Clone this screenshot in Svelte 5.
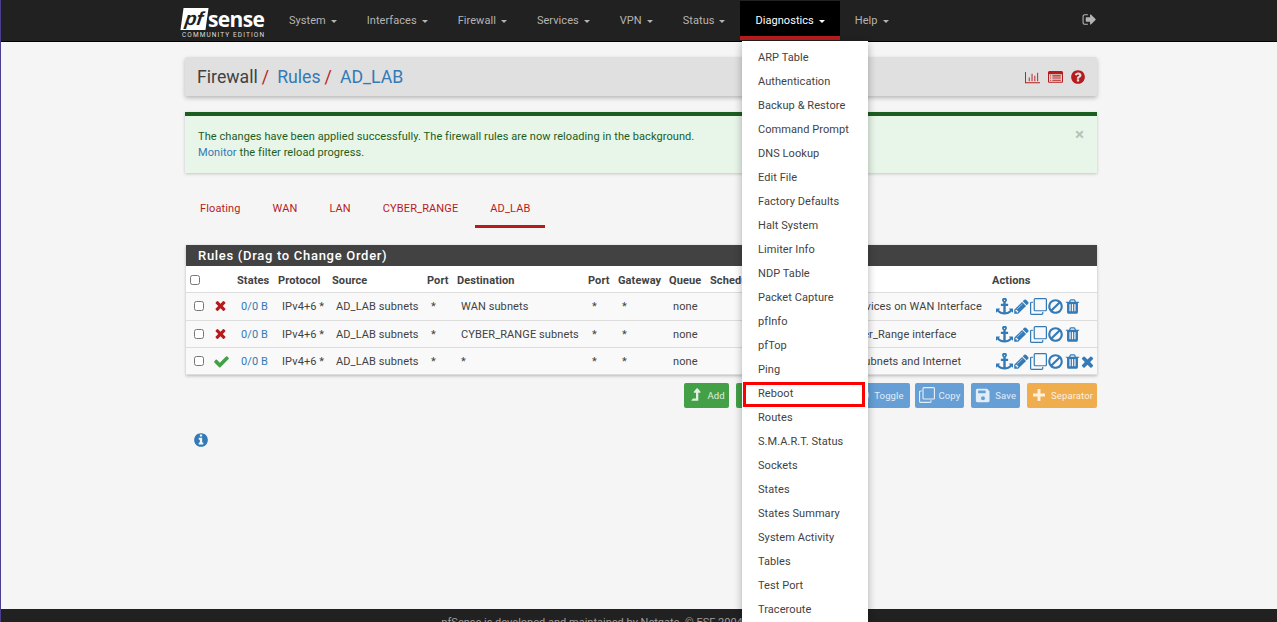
<script>
  const nav = ['System', 'Interfaces', 'Firewall', 'Services', 'VPN', 'Status', 'Diagnostics', 'Help'];
  const menu = ['ARP Table', 'Authentication', 'Backup & Restore', 'Command Prompt', 'DNS Lookup', 'Edit File', 'Factory Defaults', 'Halt System', 'Limiter Info', 'NDP Table', 'Packet Capture', 'pfInfo', 'pfTop', 'Ping', 'Reboot', 'Routes', 'S.M.A.R.T. Status', 'Sockets', 'States', 'States Summary', 'System Activity', 'Tables', 'Test Port', 'Traceroute'];
  const tabs = ['Floating', 'WAN', 'LAN', 'CYBER_RANGE', 'AD_LAB'];
  const rules = [
    { ok: false, dest: 'WAN subnets', port: '*', desc: 'Block all services on WAN Interface' },
    { ok: false, dest: 'CYBER_RANGE subnets', port: '*', desc: 'Drop to Cyber_Range interface' },
    { ok: true, dest: '*', port: '*', desc: 'Allow LAB subnets and Internet' }
  ];

  const icons = {
    anchor: 'M960 256q0-26-19-45t-45-19-45 19-19 45 19 45 45 19 45-19 19-45zm832 888v352q0 22-20 30-8 2-12 2-12 0-23-9l-93-93q-119 143-318.500 226.500t-429.500 83.500-429.500-83.500-318.500-226.500l-93 93q-9 9-23 9-4 0-12-2-20-8-20-30v-352q0-14 9-23t23-9h352q22 0 30 20 8 19-7 35l-100 100q67 91 189.500 153.500t271.500 82.500v-647h-192q-26 0-45-19t-19-45v-128q0-26 19-45t45-19h192v-163q-58-34-93-92.500t-35-128.500q0-106 75-181t181-75 181 75 75 181q0 70-35 128.500t-93 92.500v163h192q26 0 45 19t19 45v128q0 26-19 45t-45 19h-192v647q149-20 271.500-82.500t189.500-153.500l-100-100q-15-16-7-35 8-20 30-20h352q14 0 23 9t9 23z',
    pencil: 'M491 1536l91-91-235-235-91 91v107h128v128h107zm523-928q0-22-22-22-10 0-17 7l-542 542q-7 7-7 17 0 22 22 22 10 0 17-7l542-542q7-7 7-17zm-54-192l416 416-832 832h-416v-416zm683 96q0 53-37 90l-166 166-416-416 166-165q36-38 90-38 53 0 91 38l235 234q37 39 37 91z',
    clone: 'M1664 1632v-1088q0-13-9.500-22.500t-22.500-9.500h-1088q-13 0-22.500 9.500t-9.500 22.500v1088q0 13 9.500 22.500t22.500 9.500h1088q13 0 22.500-9.500t9.500-22.500zm128-1088v1088q0 66-47 113t-113 47h-1088q-66 0-113-47t-47-113v-1088q0-66 47-113t113-47h1088q66 0 113 47t47 113zm-384-384v160h-128v-160q0-13-9.500-22.500t-22.500-9.500h-1088q-13 0-22.500 9.500t-9.500 22.500v1088q0 13 9.500 22.500t22.500 9.500h160v128h-160q-66 0-113-47t-47-113v-1088q0-66 47-113t113-47h1088q66 0 113 47t47 113z',
    ban: 'M1440 893q0-161-87-295l-754 753q137 89 297 89 111 0 211.500-43.500t173.500-116.500 116-174.500 43-212.500zm-999 299l755-754q-135-91-300-91-148 0-273 73t-198 199-73 274q0 162 89 299zm1223-299q0 157-61 300t-163.500 246-245 164-298.500 61-298.500-61-245-164-163.500-246-61-300 61-299.500 163.500-245.500 245-164 298.500-61 298.500 61 245 164 163.500 245.500 61 299.500z',
    trash: 'M704 1376v-704q0-14-9-23t-23-9h-64q-14 0-23 9t-9 23v704q0 14 9 23t23 9h64q14 0 23-9t9-23zm256 0v-704q0-14-9-23t-23-9h-64q-14 0-23 9t-9 23v704q0 14 9 23t23 9h64q14 0 23-9t9-23zm256 0v-704q0-14-9-23t-23-9h-64q-14 0-23 9t-9 23v704q0 14 9 23t23 9h64q14 0 23-9t9-23zm-544-992h448l-48-117q-7-9-17-11h-317q-10 2-17 11zm928 32v64q0 14-9 23t-23 9h-96v948q0 83-47 143.500t-113 60.500h-832q-66 0-113-58.500t-47-141.500v-952h-96q-14 0-23-9t-9-23v-64q0-14 9-23t23-9h309l70-167q15-37 54-63t79-26h320q40 0 79 26t54 63l70 167h309q14 0 23 9t9 23z',
    times: 'M1490 1322q0 40-28 68l-136 136q-28 28-68 28t-68-28l-294-294-294 294q-28 28-68 28t-68-28l-136-136q-28-28-28-68t28-68l294-294-294-294q-28-28-28-68t28-68l136-136q28-28 68-28t68 28l294 294 294-294q28-28 68-28t68 28l136 136q28 28 28 68t-28 68l-294 294 294 294q28 28 28 68z',
    check: 'M1671 566q0 40-28 68l-724 724-136 136q-28 28-68 28t-68-28l-136-136-362-362q-28-28-28-68t28-68l136-136q28-28 68-28t68 28l294 295 656-657q28-28 68-28t68 28l136 136q28 28 28 68z',
    question: 'M1024 1376v-192q0-14-9-23t-23-9h-192q-14 0-23 9t-9 23v192q0 14 9 23t23 9h192q14 0 23-9t9-23zm256-672q0-88-55.500-163t-138.500-116-170-41q-243 0-371 213-15 24 8 42l132 100q7 6 19 6 16 0 25-12 53-68 86-92 34-24 86-24 48 0 85.500 26t37.500 59q0 38-20 61t-68 45q-63 28-115.500 86.500t-52.500 125.500v36q0 14 9 23t23 9h192q14 0 23-9t9-23q0-19 21.500-49.500t54.500-49.500q32-18 49-28.500t46-35 44.500-48 28-60.500 12.500-81zm384 192q0 209-103 385.500t-279.500 279.500-385.500 103-385.500-103-279.500-279.500-103-385.500 103-385.500 279.500-279.500 385.500-103 385.500 103 279.500 279.500 103 385.500z',
    info: 'M1152 1376v-160q0-14-9-23t-23-9h-96v-512q0-14-9-23t-23-9h-320q-14 0-23 9t-9 23v160q0 14 9 23t23 9h96v320h-96q-14 0-23 9t-9 23v160q0 14 9 23t23 9h448q14 0 23-9t9-23zm-128-896v-160q0-14-9-23t-23-9h-192q-14 0-23 9t-9 23v160q0 14 9 23t23 9h192q14 0 23-9t9-23zm640 416q0 209-103 385.500t-279.500 279.500-385.500 103-385.500-103-279.500-279.500-103-385.500 103-385.500 279.500-279.500 385.500-103 385.500 103 279.500 279.500 103 385.500z',
    signout: 'M704 1440q0 4 1 20t.5 26.500-3 23.500-10 19.500-20.500 6.500h-320q-119 0-203.500-84.500t-84.500-203.500v-704q0-119 84.500-203.500t203.500-84.500h320q13 0 22.500 9.500t9.500 22.500q0 4 1 20t.5 26.500-3 23.500-10 19.500-20.500 6.500h-320q-66 0-113 47t-47 113v704q0 66 47 113t113 47h312l11.500 1 11.500 3 8 5.500 7 9 2 13.500zm928-544q0 26-19 45l-544 544q-19 19-45 19t-45-19-19-45v-288h-448q-26 0-45-19t-19-45v-384q0-26 19-45t45-19h448v-288q0-26 19-45t45-19 45 19l544 544q19 19 19 45z',
    chart: 'M640 896v512h-128v-512h128zm384-512v1024h-128v-1024h128zm1024 1152v128h-2048v-1536h128v1408h1920zm-640-896v768h-128v-768h128zm384-384v1152h-128v-1152h128z',
    list: 'M384 1184v64q0 13-9.500 22.500t-22.500 9.500h-64q-13 0-22.500-9.500t-9.500-22.500v-64q0-13 9.500-22.500t22.500-9.500h64q13 0 22.500 9.500t9.500 22.500zm0-256v64q0 13-9.500 22.500t-22.500 9.500h-64q-13 0-22.500-9.500t-9.500-22.500v-64q0-13 9.500-22.500t22.500-9.500h64q13 0 22.500 9.500t9.500 22.500zm0-256v64q0 13-9.500 22.500t-22.500 9.500h-64q-13 0-22.500-9.500t-9.500-22.500v-64q0-13 9.500-22.500t22.500-9.500h64q13 0 22.500 9.500t9.500 22.500zm1152 512v64q0 13-9.500 22.500t-22.500 9.500h-960q-13 0-22.500-9.500t-9.500-22.500v-64q0-13 9.500-22.500t22.500-9.500h960q13 0 22.500 9.500t9.500 22.500zm0-256v64q0 13-9.500 22.500t-22.500 9.500h-960q-13 0-22.500-9.500t-9.500-22.500v-64q0-13 9.500-22.500t22.500-9.500h960q13 0 22.500 9.500t9.500 22.500zm0-256v64q0 13-9.500 22.500t-22.500 9.500h-960q-13 0-22.500-9.500t-9.500-22.500v-64q0-13 9.500-22.500t22.500-9.500h960q13 0 22.500 9.500t9.500 22.500zm128 704v-832q0-13-9.500-22.500t-22.500-9.500h-1472q-13 0-22.500 9.500t-9.500 22.500v832q0 13 9.500 22.500t22.500 9.500h1472q13 0 22.500-9.500t9.500-22.500zm128-1088v1088q0 66-47 113t-113 47h-1472q-66 0-113-47t-47-113v-1088q0-66 47-113t113-47h1472q66 0 113 47t47 113z',
    levelup: 'M1402 603q-18 39-58 39h-192v864q0 14-9 23t-23 9h-704q-21 0-29-18-8-20 4-35l160-192q9-11 25-11h320v-640h-192q-40 0-58-37-17-37 9-68l320-384q18-22 49-22t49 22l320 384q27 32 9 68z',
    save: 'M256 192h1060q40 0 68 28l216 216q28 28 28 68v1040q0 66-47 113t-113 47h-1212q-66 0-113-47t-47-113v-1192q0-66 47-113t113-47zm96 220v272q0 28 28 28h784q28 0 28-28v-272q0-28-28-28h-784q-28 0-28 28zm544 1060a224 224 0 1 0 0-448 224 224 0 1 0 0 448z',
    plus: 'M736 224h320v512h512v320h-512v512h-320v-512h-512v-320h512z'
  };
  const rowActions = ['anchor', 'pencil', 'clone', 'ban', 'trash'];
  const buttons = [
    { label: 'Add', icon: 'levelup', kind: 'green' },
    { label: 'Add', icon: 'levelup', kind: 'green flip' },
    { label: 'Delete', icon: 'trash', kind: 'red' },
    { label: 'Toggle', icon: 'ban', kind: 'blue toggle' },
    { label: 'Copy', icon: 'clone', kind: 'blue' },
    { label: 'Save', icon: 'save', kind: 'blue' },
    { label: 'Separator', icon: 'plus', kind: 'orange' }
  ];
</script>

{#snippet icon(name, cls = '')}
  <svg class="fa {cls}" viewBox={name === 'chart' ? '0 0 2048 1792' : '0 0 1792 1792'} aria-hidden="true"><path d={icons[name]} fill="currentColor" fill-rule={name === 'save' ? 'evenodd' : 'nonzero'} transform={name === 'clone' ? 'translate(0 1792) scale(1 -1)' : undefined} /></svg>
{/snippet}

<div class="page">
  <header class="navbar">
    <div class="navbar-inner">
      <div class="logo">
        <div class="logo-top"><span class="logo-pf">pf</span><span class="logo-sense">sense</span></div>
        <div class="logo-sub">COMMUNITY EDITION</div>
      </div>
      <nav class="nav">
        {#each nav as item}
          <div class="nav-item" class:open={item === 'Diagnostics'}>{item}<span class="caret"></span></div>
        {/each}
      </nav>
      <div class="logout">{@render icon('signout')}</div>
    </div>
    <ul class="dropdown">
      {#each menu as item}
        <li class:marked={item === 'Reboot'}>{item}</li>
      {/each}
    </ul>
  </header>

  <main class="container">
    <div class="breadcrumb">
      <div class="crumbs">
        <span>Firewall</span><i>/</i><a href="#rules">Rules</a><i>/</i><a href="#lab">AD_LAB</a>
      </div>
      <div class="crumb-icons">
        {@render icon('chart', 'ci chart')}
        {@render icon('list', 'ci')}
        {@render icon('question', 'ci help')}
      </div>
    </div>

    <div class="alert">
      <span class="alert-close">×</span>
      <div>The changes have been applied successfully. The firewall rules are now reloading in the background.</div>
      <div><a href="#monitor">Monitor</a> the filter reload progress.</div>
    </div>

    <ul class="tabs">
      {#each tabs as tab}
        <li class:active={tab === 'AD_LAB'}>{tab}</li>
      {/each}
    </ul>

    <section class="panel">
      <h2>Rules (Drag to Change Order)</h2>
      <table>
        <colgroup>
          <col style="width:22px" /><col style="width:25px" /><col style="width:41px" /><col style="width:54px" /><col style="width:95px" /><col style="width:30px" /><col style="width:131px" /><col style="width:30px" /><col style="width:51px" /><col style="width:41px" /><col style="width:91px" /><col style="width:191px" /><col />
        </colgroup>
        <thead>
          <tr>
            <th class="chk"><input type="checkbox" /></th><th></th><th>States</th><th>Protocol</th><th>Source</th><th>Port</th><th>Destination</th><th>Port</th><th>Gateway</th><th>Queue</th><th>Schedule</th><th>Description</th><th>Actions</th>
          </tr>
        </thead>
        <tbody>
          {#each rules as rule, i}
            <tr>
              <td class="chk"><input type="checkbox" /></td>
              <td class="status">
                {#if rule.ok}
                  {@render icon('check', 'st ok')}
                {:else}
                  {@render icon('times', 'st no')}
                {/if}
              </td>
              <td><a href="#states">0/0 B</a></td>
              <td>IPv4+6 *</td>
              <td>AD_LAB subnets</td>
              <td>*</td>
              <td>{rule.dest}</td>
              <td>*</td>
              <td>*</td>
              <td>none</td>
              <td></td>
              <td>{rule.desc}</td>
              <td class="actions">
                <div class="acts">
                  {#each rowActions as a}
                    {@render icon(a, 'act')}
                  {/each}
                  {#if i === 2}
                    {@render icon('times', 'act last')}
                  {/if}
                </div>
              </td>
            </tr>
          {/each}
        </tbody>
      </table>
    </section>

    <div class="buttons">
      {#each buttons as b}
        <button class="btn {b.kind}" disabled>{@render icon(b.icon, 'bi')}<span>{b.label}</span></button>
      {/each}
    </div>

    <div class="info">{@render icon('info')}</div>
  </main>

  <footer class="footer">
    <span>pfSense is developed and maintained by Netgate. © ESF 2004 - 2023 View license.</span>
  </footer>
</div>

<style>
  :global(body) {
    margin: 0;
    background: #f5f5f5;
    font-family: Roboto, "Liberation Sans", sans-serif;
    overflow: hidden;
  }

  a {
    color: #337ab7;
    text-decoration: none;
  }

  .page {
    position: relative;
    display: flex;
    flex-direction: column;
    height: 622px;
    overflow: hidden;
    border-left: 1px solid #4a3f8f;
    box-sizing: border-box;
  }

  .fa {
    display: inline-block;
    width: 16px;
    height: 16px;
  }

  /* top bar */
  .navbar {
    position: relative;
    flex: none;
    height: 41px;
    background: #212121;
    border-bottom: 1px solid #000;
    box-sizing: content-box;
  }

  .navbar-inner {
    display: flex;
    align-items: flex-start;
    height: 41px;
    width: 915px;
    margin-left: 181px;
  }

  .logo {
    flex: none;
    width: 92px;
    padding-top: 6px;
    color: #fff;
  }

  .logo-top {
    display: flex;
    align-items: center;
    height: 25px;
  }

  .logo-pf {
    display: block;
    background: #fff;
    color: #212121;
    font: italic 700 19px/22px "Liberation Sans", sans-serif;
    padding: 0 4px 0 3px;
    transform: skewX(-8deg);
  }

  .logo-sense {
    font: 700 21px/22px "Open Sans", sans-serif;
    margin-left: 1px;
    letter-spacing: -0.6px;
  }

  .logo-sub {
    font-size: 6.5px;
    line-height: 8px;
    letter-spacing: 1.1px;
    color: #ddd;
    white-space: nowrap;
  }

  .nav {
    display: flex;
    flex: 1;
  }

  .nav-item {
    padding: 0 15px;
    height: 37px;
    line-height: 41px;
    font-size: 11px;
    letter-spacing: 0.05px;
    color: #b4b4b4;
    white-space: nowrap;
  }

  .nav-item.open {
    height: 35px;
    margin-top: 1px;
    line-height: 39px;
    background: #000;
    color: #fff;
    border-bottom: 4px solid #b71c1c;
  }

  .caret {
    display: inline-block;
    margin-left: 5px;
    vertical-align: middle;
    border-top: 3px solid currentColor;
    border-left: 3px solid transparent;
    border-right: 3px solid transparent;
  }

  .logout {
    padding-top: 12px;
    color: #b4b4b4;
  }

  .logout .fa {
    width: 15px;
    height: 15px;
  }

  .dropdown {
    position: absolute;
    top: 41px;
    left: 741px;
    z-index: 10;
    width: 126px;
    margin: 0;
    padding: 5px 0 6px;
    list-style: none;
    background: #fff;
    box-shadow: 0 3px 8px rgba(0, 0, 0, 0.3);
  }

  .dropdown li {
    position: relative;
    height: 24px;
    padding-left: 16px;
    font-size: 11px;
    line-height: 24px;
    letter-spacing: 0.07px;
    color: #424242;
  }

  /* red annotation box from the screenshot */
  .dropdown li.marked::after {
    content: "";
    position: absolute;
    top: 0;
    left: 1px;
    width: 116px;
    height: 19px;
    border: 3px solid #f00;
  }

  /* main column */
  .container {
    flex: 1;
    width: 912px;
    margin-left: 184px;
    padding-top: 15px;
    color: #424242;
  }

  .breadcrumb {
    display: flex;
    align-items: center;
    justify-content: space-between;
    height: 39px;
    padding: 0 11px 0 12px;
    background: #e0e0e0;
    border-radius: 2px;
    box-shadow: 0 2px 4px rgba(0, 0, 0, 0.25);
  }

  .crumbs {
    font-size: 17.7px;
    color: #424242;
  }

  .crumbs i {
    margin: 0 8px 0 4px;
    font-style: normal;
    color: #b71c1c;
  }

  .crumb-icons {
    display: flex;
    align-items: center;
    gap: 8px;
    color: #b71c1c;
    padding-top: 1px;
  }

  .crumb-icons :global(.ci) {
    width: 15px;
    height: 15px;
  }

  .crumb-icons :global(.ci.help) {
    width: 16px;
    height: 16px;
    margin-left: -1px;
  }

  .alert {
    position: relative;
    box-sizing: border-box;
    height: 61px;
    margin-top: 16px;
    padding: 13px 13px 0;
    background: #e8f5e9;
    border-top: 4px solid #1b5e20;
    box-shadow: 0 1px 3px rgba(0, 0, 0, 0.2);
    font-size: 11px;
    line-height: 16px;
    letter-spacing: 0.08px;
    color: #1b5e20;
  }

  .alert-close {
    position: absolute;
    top: 10px;
    right: 13px;
    font-size: 17px;
    font-weight: 700;
    color: #b5c4b6;
  }

  .tabs {
    display: flex;
    gap: 2px;
    height: 38px;
    margin: 17px 0 17px;
    padding: 0;
    list-style: none;
  }

  .tabs li {
    padding: 0 15px;
    height: 35px;
    line-height: 38px;
    font-size: 11px;
    letter-spacing: 0.12px;
    color: #b71c1c;
  }

  .tabs li.active {
    border-bottom: 3px solid #b71c1c;
  }

  .panel {
    margin-left: 1px;
    background: #fff;
    box-shadow: 0 1px 3px rgba(0, 0, 0, 0.25);
  }

  .panel h2 {
    height: 21px;
    margin: 0;
    padding-left: 12px;
    background: #424242;
    color: #fff;
    font-size: 13px;
    font-weight: 500;
    line-height: 21px;
    letter-spacing: 0.7px;
  }

  table {
    width: 911px;
    table-layout: fixed;
    border-collapse: collapse;
    font-size: 11px;
    letter-spacing: 0.1px;
  }

  th {
    height: 26px;
    padding: 3px 0 0 4px;
    text-align: left;
    font-size: 11px;
    font-weight: 700;
    white-space: nowrap;
    overflow: hidden;
    border-bottom: 1px solid #ddd;
    box-sizing: border-box;
  }

  td {
    padding: 1px 0 0 8px;
    height: 25px;
    white-space: nowrap;
    background: #f9f9f9;
    border-bottom: 1px solid #ddd;
  }

  tbody tr:first-child td {
    padding-top: 0;
    height: 27px;
  }

  th.chk {
    padding-left: 4px;
  }

  td.chk {
    padding-left: 8px;
  }

  input[type="checkbox"] {
    display: block;
    width: 10px;
    height: 10px;
    margin: 0;
  }

  td.status {
    padding-left: 5px;
    line-height: 0;
  }

  td :global(.st.no) {
    width: 15px;
    height: 15px;
    margin-bottom: 2px;
    color: #b71c1c;
  }

  td :global(.st.ok) {
    width: 17px;
    height: 17px;
    color: #43a047;
  }

  td.actions {
    line-height: 0;
  }

  .acts {
    display: flex;
    align-items: center;
  }

  .acts :global(.act) {
    width: 17px;
    height: 17px;
    color: #337ab7;
  }

  .acts :global(.act.last) {
    margin-left: -2px;
  }

  .buttons {
    display: flex;
    justify-content: flex-end;
    gap: 7px;
    margin-top: 8px;
  }

  .btn {
    display: flex;
    align-items: center;
    gap: 4px;
    height: 25px;
    padding: 0 3px;
    border: 1px solid transparent;
    border-radius: 2px;
    color: #fff;
    font-family: inherit;
    font-size: 9.5px;
    letter-spacing: 0.1px;
  }

  .btn :global(.bi) {
    width: 16px;
    height: 16px;
  }

  .btn.green {
    background: #43a047;
    color: #e0efe1;
  }

  .btn.flip :global(.bi) {
    transform: scaleY(-1);
  }

  .btn.red {
    background: #d9534f;
  }

  .btn.blue {
    background: #669fd6;
    color: #e2edf7;
  }

  .btn.toggle {
    margin-right: -2px;
    padding-right: 5px;
  }

  .btn.orange {
    background: #f0ad4e;
    color: #fdf0de;
  }

  .info {
    margin: 24px 0 0 8px;
    color: #337ab7;
    line-height: 0;
  }

  .footer {
    flex: none;
    height: 13px;
    overflow: hidden;
    background: #212121;
    color: #9e9e9e;
    font-size: 11px;
    line-height: 28px;
    text-align: center;
    padding-left: 6px;
  }
</style>
